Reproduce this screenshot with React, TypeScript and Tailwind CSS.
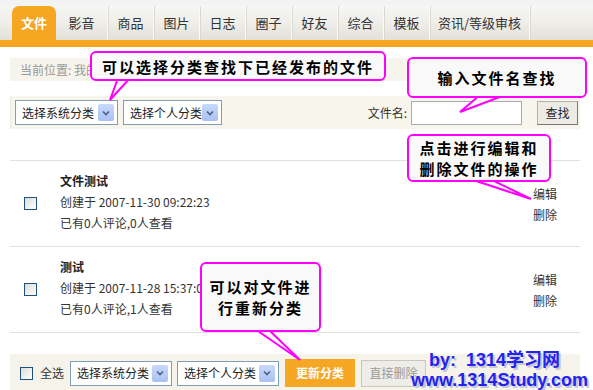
import { ReactNode } from 'react';

const tabs = ['影音', '商品', '图片', '日志', '圈子', '好友', '综合', '模板', '资讯/等级审核'];

const font = "font-['SimSun','Noto_Sans_CJK_SC',sans-serif]";

const Select = ({ label, w }: { label: string; w: string }) => (
  <div className={`flex items-center justify-between h-[25px] ${w} border border-[#7f9db9] bg-white pl-[6px] pr-[3px]`}>
    <span className="text-[12px] text-[#222]">{label}</span>
    <span className="w-[16px] h-[17px] rounded-[2px] bg-gradient-to-b from-[#c8d9fb] to-[#a9c1f2] flex items-center justify-center">
      <svg width="8" height="6" viewBox="0 0 8 6">
        <path d="M1 1.5 L4 4.5 L7 1.5" stroke="#4d6185" strokeWidth="1.6" fill="none" />
      </svg>
    </span>
  </div>
);

const Check = () => (
  <span className="block w-[13px] h-[13px] border border-[#1c5180] bg-gradient-to-br from-[#dcdcd6] to-white" />
);

const Item = ({ title, date, stat }: { title: string; date: string; stat: string }) => (
  <div className="flex items-center h-[86px] border-b border-[#e3e2da]">
    <div className="w-[50px] pl-[14px]"><Check /></div>
    <div className="flex-1 self-start pt-[9px] text-[12px] text-[#333] leading-[21px]">
      <div className="font-bold text-[#222]">{title}</div>
      <div>{date}</div>
      <div>{stat}</div>
    </div>
    <div className="w-[47px] self-start pt-[22px] text-[12px] text-[#333] leading-[21px]">
      <div>编辑</div>
      <div>删除</div>
    </div>
  </div>
);

const Callout = ({ className, children }: { className: string; children: ReactNode }) => (
  <div
    className={`absolute border-2 border-[#ff00ff] rounded-[6px] bg-[#f9f9f9] text-black font-bold font-['Noto_Sans_CJK_SC',serif] text-[15px] tracking-[2px] flex items-center justify-center text-center leading-[21px] ${className}`}
  >
    {children}
  </div>
);

export default function App() {
  return (
    <div className={`relative w-[593px] h-[390px] overflow-hidden bg-white ${font}`}>
      {/* tabs */}
      <div className="h-[40px] pt-[6px] pl-[12px] flex items-end bg-gradient-to-b from-[#f6f6f4] via-[#efeee9] to-[#e2e0d8] border-t-[5px] border-[#f3f3f3]">
        <div className="h-[34px] w-[44px] rounded-t-[7px] bg-[#f5a623] text-white font-bold text-[13px] flex items-center justify-center">
          文件
        </div>
        {tabs.map((t) => (
          <div
            key={t}
            className={`h-[34px] ${t.length > 2 ? 'w-[100px]' : t === '影音' ? 'w-[52px]' : 'w-[46px]'} border-r border-[#fbfbf9] shadow-[1px_0_0_#d9d7cf] text-[13px] text-[#333] flex items-center justify-center`}
          >
            {t}
          </div>
        ))}
      </div>
      <div className="h-[7px] bg-[#f5a623]" />

      <div className="px-[10px] pr-[13px]">
        <div className="mt-[11px] h-[23px] bg-[#f6f4ec] pl-[10px] flex items-center text-[12px] text-[#999]">
          当前位置: 我的文件
        </div>

        <div className="mt-[15px] h-[33px] bg-[#f7f5ec] border-l border-[#ebe9df] flex items-center pl-[4px] pr-[2px]">
          <Select label="选择系统分类" w="w-[103px]" />
          <div className="w-[5px]" />
          <Select label="选择个人分类" w="w-[99px]" />
          <div className="flex-1" />
          <span className="text-[12px] text-[#333] mr-[4px]">文件名:</span>
          <div className="w-[111px] h-[24px] border border-[#a5acb2] bg-white" />
          <div className="w-[15px]" />
          <button className="w-[41px] h-[24px] bg-[#ecebe6] border border-[#b3b2ab] border-b-[#777] border-r-[#777] text-[12px] text-[#222]">
            查找
          </button>
        </div>

        <div className="mt-[31px] border-t border-[#e3e2da]">
          <Item title="文件测试" date="创建于 2007-11-30 09:22:23" stat="已有0人评论,0人查看" />
          <Item title="测试" date="创建于 2007-11-28 15:37:02" stat="已有0人评论,1人查看" />
        </div>

        <div className="mt-[21px] h-[38px] bg-[#f6f4ea] flex items-center pl-[10px]">
          <Check />
          <span className="text-[12px] text-[#333] ml-[7px] mr-[6px]">全选</span>
          <Select label="选择系统分类" w="w-[102px]" />
          <div className="w-[5px]" />
          <Select label="选择个人分类" w="w-[102px]" />
          <button className="ml-[6px] w-[70px] h-[28px] bg-[#f5a623] text-white font-bold text-[12px]">
            更新分类
          </button>
          <button className="ml-[6px] w-[65px] h-[27px] bg-[#eeede8] border border-[#c7c6bf] text-[#999] text-[12px]">
            直接删除
          </button>
        </div>
      </div>

      {/* callouts */}
      <svg className="absolute inset-0 pointer-events-none" width="593" height="390">
        <polygon points="118,78 130,78 110,100" fill="#f9f9f9" stroke="#ff00ff" strokeWidth="2" />
        <polygon points="480,95 505,95 460,112" fill="#f9f9f9" stroke="#ff00ff" strokeWidth="2" />
        <polygon points="470,179 490,179 531,199" fill="#f9f9f9" stroke="#ff00ff" strokeWidth="2" />
        <polygon points="255,329 268,329 300,360" fill="#f9f9f9" stroke="#ff00ff" strokeWidth="2" />
      </svg>
      <Callout className="left-[90px] top-[51px] w-[296px] h-[30px]">可以选择分类查找下已经发布的文件</Callout>
      <Callout className="left-[407px] top-[57px] w-[180px] h-[41px]">输入文件名查找</Callout>
      <Callout className="left-[407px] top-[134px] w-[144px] h-[48px]">
        点击进行编辑和<br />删除文件的操作
      </Callout>
      <Callout className="left-[200px] top-[262px] w-[121px] h-[70px]">
        可以对文件进<br />行重新分类
      </Callout>

      {/* watermark */}
      <div className="absolute left-[411px] top-[350px] text-[#2323ee] font-bold font-['Liberation_Sans','Noto_Sans_CJK_SC',sans-serif] text-[18px] leading-[20px] [text-shadow:2px_2px_0_#c8c8d8]">
        <div className="pl-[18px]">by:&nbsp; 1314学习网</div>
        <div>www.1314Study.com</div>
      </div>
    </div>
  );
}
